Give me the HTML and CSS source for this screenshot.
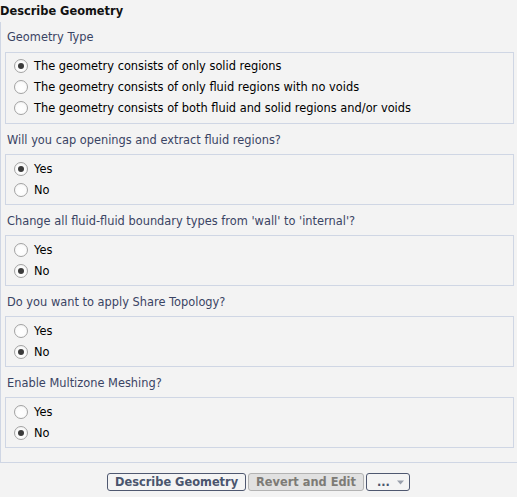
FILE: index.html
```html
<!DOCTYPE html>
<html>
<head>
<meta charset="utf-8">
<link rel="stylesheet" href="styles.css">
</head>
<body>
<div class="title">Describe Geometry</div>
<div class="panel">
  <div class="section">
    <div class="label">Geometry Type</div>
    <div class="box">
      <div class="row"><span class="radio on"></span><span>The geometry consists of only solid regions</span></div>
      <div class="row"><span class="radio"></span><span>The geometry consists of only fluid regions with no voids</span></div>
      <div class="row"><span class="radio"></span><span>The geometry consists of both fluid and solid regions and/or voids</span></div>
    </div>
  </div>
  <div class="section">
    <div class="label">Will you cap openings and extract fluid regions?</div>
    <div class="box">
      <div class="row"><span class="radio on"></span><span>Yes</span></div>
      <div class="row"><span class="radio"></span><span>No</span></div>
    </div>
  </div>
  <div class="section">
    <div class="label">Change all fluid-fluid boundary types from 'wall' to 'internal'?</div>
    <div class="box">
      <div class="row"><span class="radio"></span><span>Yes</span></div>
      <div class="row"><span class="radio on"></span><span>No</span></div>
    </div>
  </div>
  <div class="section">
    <div class="label">Do you want to apply Share Topology?</div>
    <div class="box">
      <div class="row"><span class="radio"></span><span>Yes</span></div>
      <div class="row"><span class="radio on"></span><span>No</span></div>
    </div>
  </div>
  <div class="section">
    <div class="label">Enable Multizone Meshing?</div>
    <div class="box">
      <div class="row"><span class="radio"></span><span>Yes</span></div>
      <div class="row"><span class="radio on"></span><span>No</span></div>
    </div>
  </div>
</div>
<div class="actions">
  <button class="btn">Describe Geometry</button>
  <button class="btn disabled">Revert and Edit</button>
  <button class="btn drop"><span>...</span><svg width="9" height="5" viewBox="0 0 9 5"><path d="M1 0.5 L8 0.5 L4.5 4.5 Z" fill="#9aa0ac"/></svg></button>
</div>
</body>
</html>
```
FILE: styles.css
```css
html, body {
  margin: 0;
  padding: 0;
  background: #f3f3f3;
}
body {
  font-family: "DejaVu Sans", Verdana, sans-serif;
  font-size: 11.4px;
  color: #000;
  width: 517px;
  overflow: hidden;
}
.title {
  font-weight: bold;
  height: 22px;
  line-height: 22px;
  padding-left: 0;
  color: #111;
}
.panel {
  border-left: 1px solid #cfd6e4;
  border-bottom: 1px solid #cfd6e4;
  padding: 0 3px 14px 4px;
}
.section {
  padding-top: 7px;
}
.section + .section {
  padding-top: 8px;
}
.label {
  height: 16px;
  line-height: 16px;
  margin-bottom: 7px;
  padding-left: 2px;
  color: #3a4464;
}
.section + .section .label {
  margin-bottom: 6px;
}
.box {
  border: 1px solid #cfd6e4;
  padding: 2px 0 5px 0;
}
.section + .section .box {
  padding: 3px 0 4px 0;
}
.row {
  height: 21px;
  display: flex;
  align-items: center;
  padding-left: 8px;
  gap: 6px;
}
.radio {
  box-sizing: border-box;
  width: 14px;
  height: 14px;
  border-radius: 50%;
  border: 1px solid #a3a3a3;
  background: radial-gradient(circle at 50% 60%, #ffffff 0%, #fbfbfb 55%, #e9e9e9 100%);
  display: flex;
  align-items: center;
  justify-content: center;
  flex: none;
}
.radio.on::after {
  content: "";
  width: 6px;
  height: 6px;
  border-radius: 50%;
  background: #3b3b3b;
}
.actions {
  display: flex;
  justify-content: center;
  gap: 2px;
  padding-top: 10px;
}
.btn {
  font-family: "DejaVu Sans", Verdana, sans-serif;
  font-size: 11.4px;
  font-weight: bold;
  color: #4a546d;
  background: #f4f4f4;
  border: 1px solid #4f5870;
  border-radius: 3px;
  height: 18px;
  padding: 0 7px;
  line-height: 16px;
  margin: 0;
}
.btn.disabled {
  background: #e1e1e1;
  border-color: #b3b3b3;
  color: #7d7b76;
}
.btn.drop {
  display: flex;
  align-items: center;
  justify-content: space-between;
  width: 44px;
  padding: 0 4px 0 10px;
}
.btn.drop span {
  line-height: 12px;
}
```
